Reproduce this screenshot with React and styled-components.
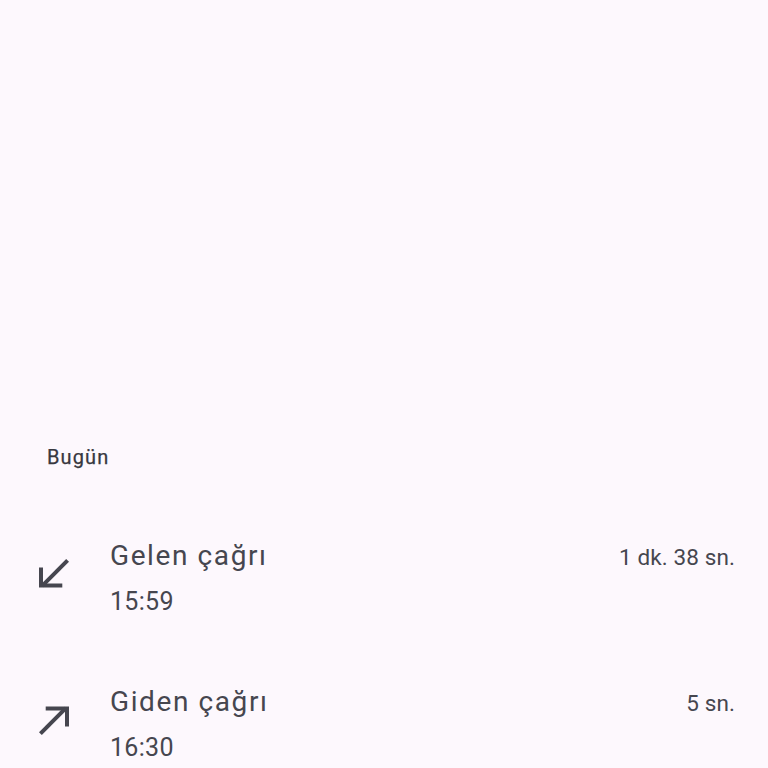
import React from "react";
import styled, { createGlobalStyle } from "styled-components";

const calls = [
  { id: 1, type: "incoming", title: "Gelen çağrı", time: "15:59", duration: "1 dk. 38 sn." },
  { id: 2, type: "outgoing", title: "Giden çağrı", time: "16:30", duration: "5 sn." }
];

const GlobalStyle = createGlobalStyle`
  html, body {
    margin: 0;
    padding: 0;
    background: #fdf8fd;
  }
  body {
    font-family: Roboto, "Noto Sans", sans-serif;
    color: #46464f;
  }
`;

const CallArrow = ({ outgoing }) => (
  <ArrowSvg viewBox="0 0 30 30" $outgoing={outgoing}>
    <polyline
      points="2,8.5 2,26.5 23.3,26.5"
      fill="none"
      stroke="currentColor"
      strokeWidth="4"
      strokeLinejoin="miter"
    />
    <line x1="3.2" y1="26.8" x2="28.6" y2="1.4" stroke="currentColor" strokeWidth="4" />
  </ArrowSvg>
);

const CallRow = ({ type, title, time, duration }) => (
  <Row>
    <IconCell>
      <CallArrow outgoing={type === "outgoing"} />
    </IconCell>
    <Content>
      <TopLine>
        <Title>{title}</Title>
        <Duration>{duration}</Duration>
      </TopLine>
      <Time>{time}</Time>
    </Content>
  </Row>
);

const App = () => (
  <>
    <GlobalStyle />
    <Page>
      <SectionHeader>Bugün</SectionHeader>
      <List>
        {calls.map(call => (
          <CallRow key={call.id} {...call} />
        ))}
      </List>
    </Page>
  </>
);

const Page = styled.div`
  min-height: 768px;
  padding-top: 443px;
  box-sizing: border-box;
`;

const SectionHeader = styled.h2`
  margin: 0;
  padding-left: 47px;
  font-size: 20px;
  line-height: 28px;
  font-weight: 400;
  letter-spacing: 1.1px;
  color: #38383f;
  -webkit-text-stroke: 0.25px #38383f;
`;

const List = styled.div`
  display: flex;
  flex-direction: column;
  margin-top: 34px;
`;

const Row = styled.div`
  display: flex;
  align-items: center;
  height: 146px;
  padding: 0 33px 0 39px;
  box-sizing: border-box;
`;

const IconCell = styled.div`
  display: flex;
  width: 71px;
  margin-bottom: 8px;
`;

const ArrowSvg = styled.svg`
  width: 30px;
  height: 30px;
  color: #46464f;
  transform: ${p => (p.$outgoing ? "rotate(180deg)" : "none")};
`;

const Content = styled.div`
  flex: 1;
  display: flex;
  flex-direction: column;
`;

const TopLine = styled.div`
  display: flex;
  justify-content: space-between;
  align-items: baseline;
`;

const Title = styled.span`
  font-size: 28px;
  line-height: 36px;
  letter-spacing: 1.6px;
`;

const Duration = styled.span`
  font-size: 22.5px;
  line-height: 36px;
  letter-spacing: 0.1px;
`;

const Time = styled.span`
  margin-top: 11px;
  font-size: 25px;
  line-height: 32px;
  letter-spacing: 0.3px;
`;

export default App;
